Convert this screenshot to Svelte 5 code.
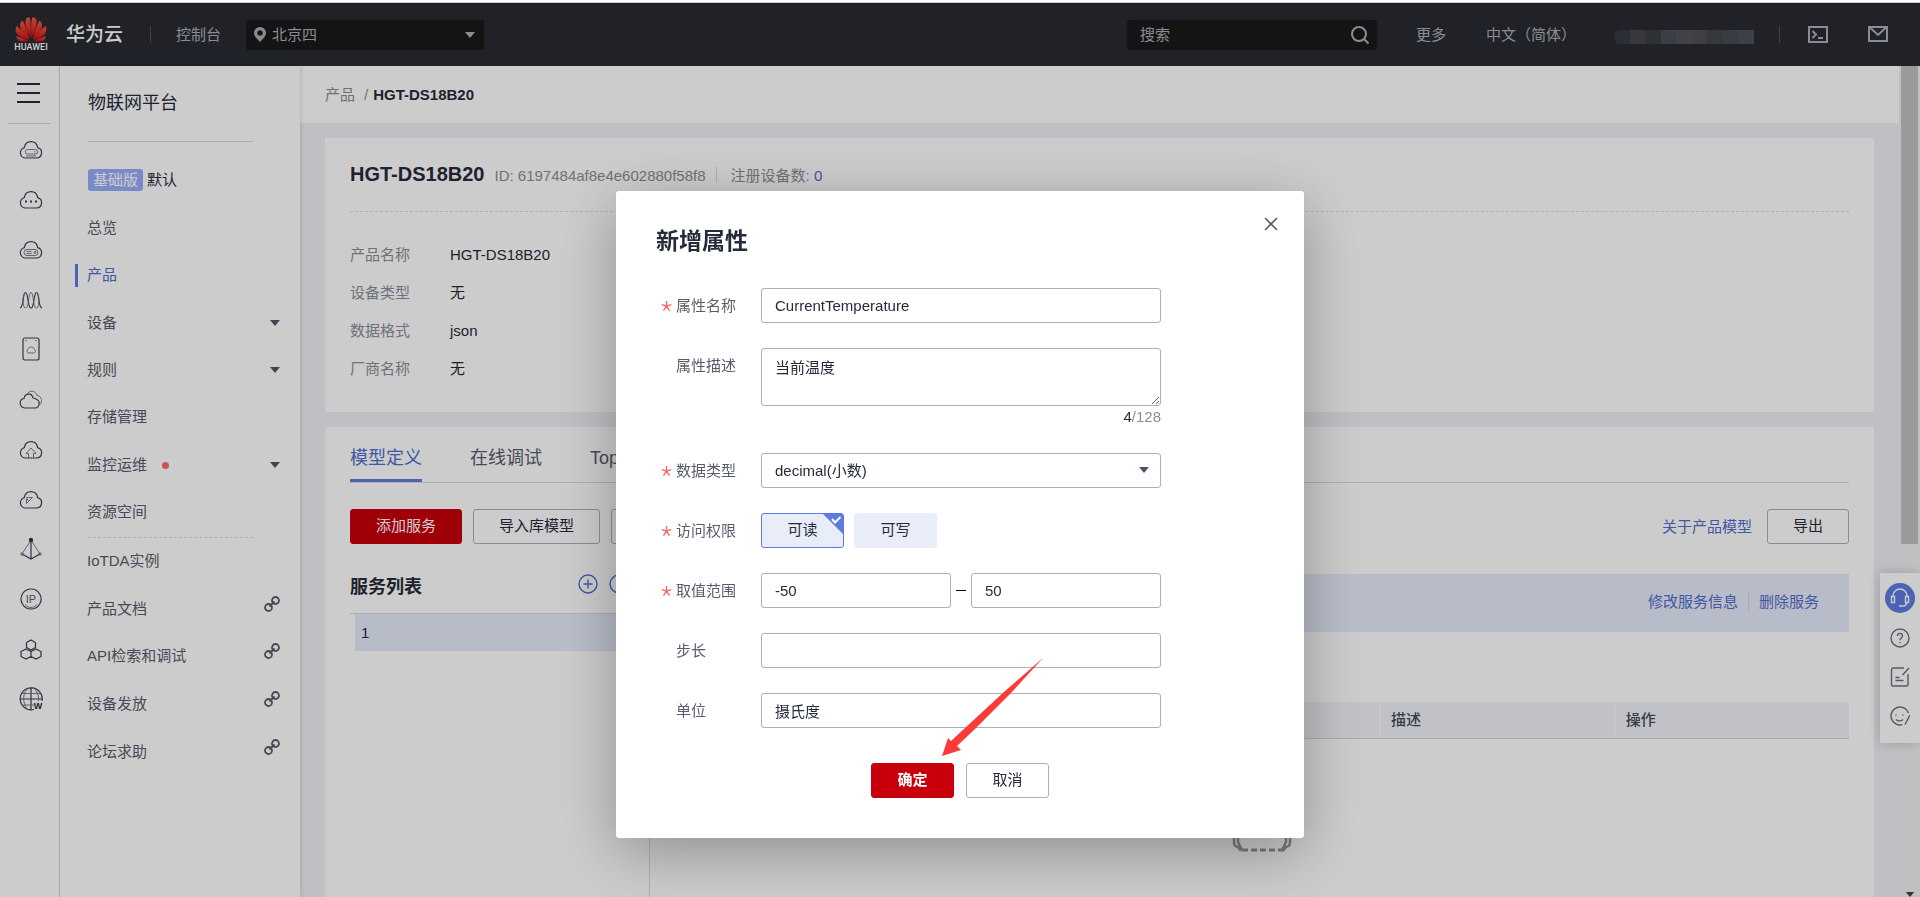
<script>
  // Product detail page of the IoT console with the "add property" dialog open.
  const cloud = 'M8 22h10.500a5.300 5.300 0 0 0 1.200-10.400C19 8 16.500 5.700 13 5.700S7 8 6.300 11.600A5.300 5.300 0 0 0 8 22z';

  const rail = [
    { name: '弹性云服务器', d: cloud, thin: 'M9.500 13.500h8a2 2 0 0 1 0 4.500h-8a2 2 0 0 1 0-4.500zM16 15.800h1.500M8 20h10' },
    { name: '云容器', d: cloud, thin: '', dots: true },
    { name: '裸金属服务器', d: cloud, thin: 'M9 13.500h8a3 3 0 0 1 0 6h-8a3 3 0 0 1 0-6zM8.500 15.500h5M8.500 17.500h5M17 15.500a1 1 0 1 0 .1 0z' },
    { name: '弹性伸缩', d: 'M2 22c4 0 2.500-15.500 5.500-15.500S9.500 22 13 22s2.500-15.500 5.500-15.500S20 22 24 22', thin: 'M7.500 22c-3.500 0-3-15.500 0-15.500M7.500 22c4 0 2.500-15.500 5.500-15.500S14.500 22 18.500 22M18.500 6.500c3 0 3.500 15.500 0 15.500' },
    { name: '云硬盘', d: 'M7 2h12a2 2 0 0 1 2 2v18a2 2 0 0 1-2 2H7a2 2 0 0 1-2-2V4a2 2 0 0 1 2-2zM7.500 4.500h1M17.500 4.500h1', thin: 'M11 17h4.500a2 2 0 0 0 .8-3.800c-.5-3-5.500-3-6.200 0A2 2 0 0 0 11 17z' },
    { name: '云备份', d: 'M7 22h10a4.500 4.500 0 0 0 1-8.800c-1-1-2-1.200-3-1.200-1-5.500-8-5-9 .5C.8 13 .8 21.500 7 22z', thin: 'M9 8c3-4.500 9-3 10 1.500 5 .5 6 6.500 2.500 9.500' },
    { name: '对象存储', d: cloud, thin: 'M10.500 22v-4.500H8l5-5.500 5 5.500h-2.500V22' },
    { name: '云加速', d: cloud, thin: 'M8.500 11.500h6l-6 6v-4.500M8.500 12l2 3' },
    { name: '负载均衡', d: 'M13 3v20M4 18l9 5 9-5', thin: 'M13 4 4 18M13 4l9 14M3 17h2v2H3zM21 17h2v2h-2z', top: true },
    { name: '弹性公网', d: 'M13 3a10 10 0 1 0 .1 0z', thin: 'M7 18.500c3.500 4 8.500 4 12 0', text: 'IP' },
    { name: '区块链', d: 'm13 4 4.500 2.500v5L13 14l-4.500-2.500v-5zM8 13l5 2.500v5L8 23l-5-2.500v-5zM18 13l5 2.500v5L18 23l-5-2.500v-5z', thin: '' },
    { name: '域名', d: 'M16 23.500A11 11 0 1 1 24 15M13 2v22M2.500 13H24', thin: 'M9 23C4.500 16 4.500 9 9 3M17 3c3 4 4 8 3.500 12M4 7.500h18M4 19h12', text: 'w' }
  ];

  const menu = [
    { label: '总览' },
    { label: '产品', active: true },
    { label: '设备', sub: true },
    { label: '规则', sub: true },
    { label: '存储管理' },
    { label: '监控运维', sub: true, dot: true },
    { label: '资源空间' }
  ];
  const links = [
    { label: 'IoTDA实例' },
    { label: '产品文档', ext: true },
    { label: 'API检索和调试', ext: true },
    { label: '设备发放', ext: true },
    { label: '论坛求助', ext: true }
  ];
  const info = [
    ['产品名称', 'HGT-DS18B20'],
    ['设备类型', '无'],
    ['数据格式', 'json'],
    ['厂商名称', '无']
  ];
  const mosaic = ['#363a44', '#45484f', '#3c3e42', '#4a4e58', '#52545b', '#4e5158', '#44464b', '#474b54', '#4d5058'];
  // left half of the flower, mirrored for the right half
  const petals = [
    'M15.400 21C13 15 9.500 9 10.500 3 11 1 13 .3 14.700.3 16 5 16 14 15.400 21z',
    'M14.500 22.500C9 18 4.500 13 5 8c.3-2.500 1.500-3.700 2.800-4.200C10 9 13 15 14.500 22.500z',
    'M13.600 23C8 21.500 1 18.500.6 13c-.1-2 .4-3.200 1-4C5 12.500 11 17 13.600 23z',
    'M13 24c-4 1-9 1-10.500-1.500-.7-1-1.100-2.300-1.100-3.500C5 20.500 10 22 13 24z'
  ];

  let name = $state('CurrentTemperature');
  let desc = $state('当前温度');
  let type = $state('decimal');
  let readable = $state(true);
  let writable = $state(false);
  let min = $state('-50');
  let max = $state('50');
  let step = $state('');
  let unit = $state('摄氏度');
</script>

{#snippet caret()}
  <svg class="caret" viewBox="0 0 10 6" aria-hidden="true"><path d="M0 0h10L5 6z" /></svg>
{/snippet}

{#snippet star()}
  <svg class="star" viewBox="0 0 12 12" aria-hidden="true"><path d="M6 6V.5M6 6 .8 4.500M6 6l5.200-1.500M6 6l-3.300 5M6 6l3.300 5" /></svg>
{/snippet}

<div class="app">
  <header>
    <div class="logo">
      <svg viewBox="0 0 32 25" aria-hidden="true">
        <defs>
          <linearGradient id="petal" x1="0" y1="0" x2="0" y2="1">
            <stop offset="0" stop-color="#f25a45" />
            <stop offset="1" stop-color="#cf0a0e" />
          </linearGradient>
        </defs>
        {#each petals as d}
          <path {d} fill="url(#petal)" />
          <path {d} fill="url(#petal)" transform="matrix(-1 0 0 1 32 0)" />
        {/each}
      </svg>
      <span>HUAWEI</span>
    </div>
    <strong class="brand">华为云</strong>
    <i class="bar"></i>
    <a class="console" href="#console">控制台</a>
    <button class="region">
      <svg viewBox="0 0 12 15" aria-hidden="true"><path fill-rule="evenodd" d="M6 0a6 6 0 0 0-6 6c0 3.500 3.500 6 6 9 2.500-3 6-5.500 6-9a6 6 0 0 0-6-6zm0 3.200a2.700 2.700 0 1 1 0 5.400 2.700 2.700 0 0 1 0-5.400z" /></svg>
      <span>北京四</span>
      {@render caret()}
    </button>
    <div class="search">
      <input aria-label="搜索" placeholder="搜索" />
      <svg viewBox="0 0 18 18" aria-hidden="true"><circle cx="8" cy="8" r="7" /><path d="m13 13 4.500 4.500" /></svg>
    </div>
    <a href="#more" class="more">更多</a>
    <a href="#lang" class="lang">中文（简体）</a>
    <div class="user">{#each mosaic as c}<i style="background:{c}"></i>{/each}</div>
    <i class="bar"></i>
    <button class="tool" aria-label="终端"><svg viewBox="0 0 20 17"><path d="M1 1h18v15H1zM4.500 5l3.500 3.500L4.500 12M10 12h5" /></svg></button>
    <button class="tool" aria-label="消息"><svg viewBox="0 0 20 17"><path d="M1 1h18v14H1zM2 1.500l8 7.500 8-7.500" /></svg></button>
  </header>

  <div class="body">
    <nav class="rail">
      <button class="burger" aria-label="菜单"><i></i><i></i><i></i></button>
      <div class="railicons">
        {#each rail as r}
          <a href="#service" aria-label={r.name}>
            <svg viewBox="0 0 26 26">
              <path d={r.d} />
              {#if r.thin}<path class="thin" d={r.thin} />{/if}
              {#if r.dots}<path class="dots" d="M7 15.500h2M12 15.500h2M17 15.500h2" />{/if}
              {#if r.top}<circle class="fill" cx="13" cy="4" r="1.600" />{/if}
              {#if r.text === 'IP'}<text x="13" y="17" font-size="11">IP</text>{/if}
              {#if r.text === 'w'}<text class="w" x="20" y="23" font-size="9">W</text>{/if}
            </svg>
          </a>
        {/each}
      </div>
    </nav>

    <aside>
      <h2>物联网平台</h2>
      <div class="edition"><span>基础版</span>默认</div>
      <ul class="menu">
        {#each menu as m}
          <li class:active={m.active}>
            <a href="#menu">{m.label}</a>
            {#if m.dot}<i class="dot"></i>{/if}
            {#if m.sub}{@render caret()}{/if}
          </li>
        {/each}
      </ul>
      <ul class="links">
        {#each links as l}
          <li>
            <a href="#link">{l.label}</a>
            {#if l.ext}
              <svg class="chain" viewBox="0 0 16 16" aria-hidden="true"><circle cx="11.500" cy="4.500" r="3.500" /><circle cx="4.500" cy="11.500" r="3.500" /><path d="m5.500 10.500 5-5" /></svg>
            {/if}
          </li>
        {/each}
      </ul>
    </aside>

    <main>
      <div class="crumbs"><a href="#products">产品</a><span>/</span><b>HGT-DS18B20</b></div>

      <section class="card product">
        <div class="head">
          <h1>HGT-DS18B20</h1>
          <span class="pid">ID: 6197484af8e4e602880f58f8</span>
          <i></i>
          <span>注册设备数: <a href="#devices">0</a></span>
        </div>
        <dl>
          {#each info as [k, v]}
            <dt>{k}</dt>
            <dd>{v}</dd>
          {/each}
        </dl>
      </section>

      <section class="card model">
        <div class="tabs">
          <button class="on">模型定义</button>
          <button>在线调试</button>
          <button>Topic</button>
        </div>
        <div class="actions">
          <button class="btn primary">添加服务</button>
          <button class="btn">导入库模型</button>
          <button class="btn" aria-label="导入"></button>
          <a href="#about">关于产品模型</a>
          <button class="btn">导出</button>
        </div>
        <div class="split">
          <div class="services">
            <div class="shead">
              <h3>服务列表</h3>
              <button aria-label="添加"><svg viewBox="0 0 20 20"><circle cx="10" cy="10" r="9" /><path d="M10 5.500v9M5.500 10h9" /></svg></button>
              <button aria-label="搜索"><svg viewBox="0 0 20 20"><circle cx="10" cy="10" r="9" /></svg></button>
            </div>
            <div class="sitem">1</div>
          </div>
          <div class="detail">
            <div class="band"><a href="#edit">修改服务信息</a><i></i><a href="#delete">删除服务</a></div>
            <table>
              <thead><tr><th></th><th></th><th></th><th>描述</th><th>操作</th></tr></thead>
            </table>
            <svg class="empty" viewBox="0 0 60 60" aria-hidden="true"><path d="M2 30v20a5 5 0 0 0 4 5l3 4M58 30v20a5 5 0 0 1-4 5l-3 4M6 30v20l4 8M54 30v20l-4 8" /><path class="dash" d="M10 58h41" /></svg>
          </div>
        </div>
      </section>
    </main>

    <div class="scroll"><div class="thumb"></div>{@render caret()}</div>
  </div>

  <div class="float">
    <button class="help" aria-label="在线客服"><svg viewBox="0 0 20 20"><path d="M3 9V8a7 7 0 0 1 14 0v1M1.500 8.500h3v6h-3zM15.500 8.500h3v6h-3zM16.500 15c0 2-2 3-4 3M9 18h3.500" /></svg></button>
    <button aria-label="帮助"><svg viewBox="0 0 20 20"><circle cx="10" cy="10" r="9" /><path d="M7.500 8c0-3.500 5-3.500 5 0 0 2-2.500 2-2.500 4.200M10 14v1.300" /></svg></button>
    <button aria-label="反馈"><svg viewBox="0 0 20 20"><path d="M14 1H3a1.500 1.500 0 0 0-1.500 1.500v15A1.500 1.500 0 0 0 3 19h13.500a1.500 1.500 0 0 0 1.500-1.500V7M19 1l-6.500 7M5.500 10.500h4M5.500 13.500h8" /></svg></button>
    <button aria-label="评价"><svg viewBox="0 0 20 20"><path d="M12.500 18.700A9 9 0 1 1 18.500 7M20 9l-5 9.500M6 8.500v1.300M13 8.500v1.300M6 13.500c2 1.800 5 1.800 7 0" /></svg></button>
  </div>

  <div class="mask">
    <form class="dialog" onsubmit={(e) => e.preventDefault()}>
      <button type="button" class="close" aria-label="关闭"><svg viewBox="0 0 14 14"><path d="m1 1 12 12M13 1 1 13" /></svg></button>
      <h2>新增属性</h2>

      <div class="row">
        <label for="name">{@render star()}属性名称</label>
        <input id="name" bind:value={name} />
      </div>
      <div class="row">
        <label for="desc">属性描述</label>
        <div class="area">
          <textarea id="desc" bind:value={desc}></textarea>
          <div class="count"><b>{desc.length}</b>/128</div>
        </div>
      </div>
      <div class="row">
        <label for="type">{@render star()}数据类型</label>
        <div class="select">
          <select id="type" bind:value={type}><option value="decimal">decimal(小数)</option></select>
          {@render caret()}
        </div>
      </div>
      <div class="row">
        <span class="label">{@render star()}访问权限</span>
        <div class="perms">
          <label class:checked={readable}>
            <input type="checkbox" bind:checked={readable} />可读
            {#if readable}<svg viewBox="0 0 20 20" aria-hidden="true"><path class="corner" d="M0 0h20v20z" /><path class="tick" d="m9 5 3 3.500L17.500 3" /></svg>{/if}
          </label>
          <label class:checked={writable}><input type="checkbox" bind:checked={writable} />可写</label>
        </div>
      </div>
      <div class="row">
        <label for="min">{@render star()}取值范围</label>
        <div class="range">
          <input id="min" bind:value={min} />
          <i></i>
          <input aria-label="最大值" bind:value={max} />
        </div>
      </div>
      <div class="row">
        <label for="step">步长</label>
        <input id="step" bind:value={step} />
      </div>
      <div class="row">
        <label for="unit">单位</label>
        <input id="unit" bind:value={unit} />
      </div>

      <div class="foot">
        <button class="btn primary"><b>确定</b></button>
        <button type="button" class="btn">取消</button>
      </div>

      <svg class="arrow" viewBox="0 0 101 99" aria-hidden="true"><path d="M0 98 6 80l3 3L63 33 101 0 69 35 33 71 15 88l4 4z" /></svg>
    </form>
  </div>
</div>

<style>
  :global(body) { margin: 0; overflow: hidden; }
  .app {
    display: flex;
    flex-direction: column;
    height: 100vh;
    box-sizing: border-box;
    border-top: 3px solid #fff;
    font: 15px/22px "Liberation Sans", "Noto Sans CJK SC", sans-serif;
    color: #252b3a;
    background: #eef0f5;
  }
  .app *, .app *::before { box-sizing: border-box; }
  a { color: inherit; text-decoration: none; }
  button, input, select, textarea { font: inherit; color: inherit; margin: 0; }
  button { padding: 0; border: 0; background: none; cursor: pointer; }
  ul, dl, dd, h1, h2, h3 { margin: 0; padding: 0; }
  ul { list-style: none; }
  svg { display: block; fill: none; flex: none; }
  .caret { width: 10px; height: 6px; fill: #4f566a; }

  header {
    display: flex;
    align-items: center;
    flex: none;
    height: 63px;
    padding: 0 32px 0 15px;
    background: #282b33;
    color: #adb0b8;
    box-shadow: 0 -1px 0 #ccc;
  }
  .logo { width: 32px; color: #fff; }
  .logo svg { width: 32px; height: 25px; }
  .logo span { display: flex; justify-content: center; font: 500 9px/11px Roboto, sans-serif; }
  .brand { margin-left: 19px; font-size: 19px; font-weight: 500; color: #fff; }
  .bar { width: 1px; height: 17px; background: #50535c; }
  .brand + .bar { margin: 0 25px 0 27px; }
  .region {
    display: flex;
    align-items: center;
    width: 238px;
    height: 30px;
    margin-left: 25px;
    padding: 0 9px 0 8px;
    border-radius: 3px;
    background: #191919;
  }
  .region svg:first-child { width: 12px; height: 15px; fill: #adb0b8; }
  .region span { margin: 0 auto 0 6px; }
  .region .caret { fill: #adb0b8; height: 8px; }
  .search {
    display: flex;
    align-items: center;
    width: 250px;
    height: 30px;
    margin-left: auto;
    padding: 0 8px 0 13px;
    border-radius: 3px;
    background: #191919;
  }
  .search input { flex: 1; min-width: 0; padding: 0; border: 0; background: none; outline: 0; }
  .search input::placeholder { color: #adb0b8; opacity: 1; }
  .search svg { width: 18px; height: 18px; stroke: #adb0b8; stroke-width: 2; }
  .more { margin-left: 39px; }
  .lang { margin-left: 40px; }
  .user { display: flex; width: 140px; margin: 4px 25px 0 38px; }
  .user i { flex: 1; height: 14px; }
  .user i:first-child { border-radius: 6px 0 0 6px; }
  .tool { margin-left: 28px; }
  .tool + .tool { margin-left: 40px; }
  .tool svg { width: 20px; height: 17px; stroke: #adb0b8; stroke-width: 2; }

  .body { display: flex; flex: 1; min-height: 0; }
  .rail { flex: none; width: 60px; border-right: 1px solid #dcdcde; background: #fff; }
  .burger {
    display: flex;
    flex-direction: column;
    justify-content: center;
    gap: 7px;
    width: 43px;
    height: 58px;
    margin-left: 8px;
    padding: 0 11px 4px 9px;
    border-bottom: 1px solid #dcdcde;
  }
  .burger i { height: 2px; background: #252b3a; }
  .railicons a { display: flex; align-items: center; height: 50px; padding-left: 18px; }
  .railicons svg { width: 26px; height: 26px; stroke: #3c4252; stroke-width: 1.2; }
  .railicons .thin { stroke: #6c7180; stroke-width: 0.9; }
  .railicons .dots { stroke-width: 2; }
  .railicons .fill { fill: #252b3a; }
  .railicons text { fill: #5c6170; stroke: none; text-anchor: middle; }
  .railicons .w { fill: #252b3a; font-weight: 700; }

  aside { position: relative; flex: none; width: 240px; padding-right: 20px; background: #fff; box-shadow: 1px 0 4px rgba(0, 0, 0, .12); }
  aside h2 { width: 165px; height: 76px; margin-left: 28px; border-bottom: 1px solid #dcdcde; font-size: 18px; line-height: 74px; font-weight: 400; }
  .edition { display: flex; align-items: center; gap: 4px; height: 23px; margin: 26px 0 13px 28px; }
  .edition span { padding: 0 5px; border-radius: 3px; background: #96adfa; color: #fff; line-height: 22px; }
  .menu, .links { display: grid; grid-auto-rows: 1fr; color: #575d6c; }
  .menu { height: 332px; }
  .links { position: relative; height: 240px; padding-top: 1px; }
  .links::before { content: ''; position: absolute; left: 28px; top: 1px; width: 165px; border-top: 1px dashed #dcdcde; }
  .menu li, .links li { position: relative; display: flex; align-items: center; padding-left: 27px; }
  .menu .caret, .chain { margin-left: auto; }
  .active { color: #526ecc; }
  .active::before { content: ''; position: absolute; left: 15px; width: 3px; height: 23px; background: #5e7ce0; }
  .dot { width: 7px; height: 7px; margin: 2px 0 0 15px; border-radius: 50%; background: #fa6b66; }
  .chain { width: 16px; height: 16px; margin-bottom: 10px; stroke: #575d6c; stroke-width: 1.8; }

  main { display: flex; flex-direction: column; flex: 1; min-width: 0; }
  .crumbs { flex: none; height: 57px; padding-left: 25px; background: #fff; line-height: 57px; }
  .crumbs a, .crumbs span { color: #8a8e99; }
  .crumbs span { margin: 0 5px 0 9px; }
  .card { flex: none; margin: 15px 25px 0; padding: 0 25px; background: #fff; }
  .product { height: 274px; }
  .head { display: flex; align-items: baseline; height: 74px; padding-top: 24px; border-bottom: 1px dashed #dcdcde; color: #8a8e99; }
  .head h1 { color: #252b3a; font-size: 20px; line-height: 24px; }
  .head .pid { margin-left: 10px; }
  .head i { align-self: flex-start; width: 1px; height: 15px; margin: 5px 14px 0 10px; background: #dcdcde; }
  .head a { color: #526ecc; }
  dl { display: grid; grid-template-columns: 100px 1fr; row-gap: 16px; padding-top: 32px; }
  dt { color: #8a8e99; }

  .model { flex: 1 0 0; min-height: 0; display: flex; flex-direction: column; }
  .tabs { display: flex; flex: none; gap: 48px; height: 56px; border-bottom: 1px solid #dcdcde; font-size: 18px; color: #575d6c; }
  .tabs button { padding-top: 9px; border-bottom: 3px solid transparent; }
  .tabs .on { border-color: #5e7ce0; color: #526ecc; }
  .btn { height: 35px; padding: 0 25px 2px; border: 1px solid #adb0b8; border-radius: 3px; }
  .primary { border-color: #c7000b; background: #c7000b; color: #fff; }
  .actions { display: flex; align-items: center; flex: none; gap: 11px; margin-top: 26px; }
  .actions a { margin: 0 4px 0 auto; color: #526ecc; }
  .split { display: flex; flex: 1; }
  .services { flex: none; width: 300px; border-right: 1px solid #dcdcde; }
  .shead { display: flex; align-items: center; gap: 11px; height: 70px; padding: 11px 20px 0 0; border-bottom: 1px solid #dcdcde; }
  .shead h3 { margin-right: auto; padding-top: 6px; font-size: 18px; }
  .shead svg { width: 20px; height: 20px; stroke: #526ecc; stroke-width: 1.4; }
  .sitem { height: 37px; margin-left: 5px; padding-left: 6px; background: #e6ecfb; line-height: 38px; }
  .detail { flex: 1; padding: 30px 0 0 25px; }
  .band { display: flex; align-items: center; justify-content: flex-end; height: 58px; padding: 0 30px 2px 0; background: #e6ecfb; color: #526ecc; }
  .band i { width: 1px; height: 20px; margin: 0 10px; background: #d3d7e2; }
  table { width: 100%; margin-top: 70px; border-collapse: collapse; table-layout: fixed; }
  th { height: 36px; padding: 0 11px; border-left: 1px solid #fff; border-bottom: 1px solid #d5d8df; background: #f2f3f9; font-weight: 500; text-align: left; color: #464c59; }
  .empty { width: 60px; height: 60px; margin: 53px auto 0; stroke: #999; stroke-width: 2.5; }
  .empty .dash { stroke-width: 3; stroke-dasharray: 6 3; }

  .scroll { display: flex; flex-direction: column; flex: none; justify-content: space-between; align-items: center; width: 21px; background: #f1f1f1; }
  .thumb { width: 17px; height: 478px; background: #c1c1c1; }
  .scroll .caret { height: 5px; fill: #404040; }

  .float {
    position: fixed;
    right: 0;
    top: 573px;
    display: flex;
    flex-direction: column;
    align-items: center;
    gap: 19px;
    width: 40px;
    height: 170px;
    padding-top: 10px;
    background: #fff;
    box-shadow: 0 0 12px rgba(0, 0, 0, .2);
  }
  .float svg { width: 20px; height: 20px; stroke: #6c7180; stroke-width: 1.4; }
  .float .help { display: flex; align-items: center; justify-content: center; width: 30px; height: 30px; margin-bottom: -4px; border-radius: 50%; background: #5e7ce0; }
  .help svg { stroke: #fff; }

  .mask { position: fixed; z-index: 10; inset: 3px 0 0; display: flex; align-items: flex-start; justify-content: center; padding-top: 188px; background: rgba(0, 0, 0, .2); }
  .dialog { position: relative; width: 688px; padding: 35px 40px 40px; border-radius: 3px; background: #fff; box-shadow: 0 15px 60px rgba(0, 0, 0, .3); }
  .dialog h2 { margin-bottom: 32px; font-size: 23px; line-height: 30px; }
  .close { position: absolute; right: 26px; top: 26px; }
  .close svg { width: 14px; height: 14px; stroke: #575d6c; stroke-width: 1.6; }
  .row { display: flex; align-items: flex-start; margin-bottom: 25px; }
  .row > label, .label { position: relative; flex: none; width: 105px; padding-left: 20px; line-height: 35px; color: #575d6c; }
  .star { position: absolute; left: 5px; top: 12px; width: 11px; height: 12px; stroke: #fa6b66; stroke-width: 1.5; }
  .row > input, .area, .select, .range { width: 400px; }
  .row input:not([type]), textarea, select { height: 35px; padding: 0 13px; border: 1px solid #adb0b8; border-radius: 3px; background: #fff; outline: 0; }
  .row input[type='checkbox'] { position: absolute; inset: 0; margin: 0; opacity: 0; }
  textarea { display: block; width: 100%; height: 58px; padding: 8px 13px; }
  .count { line-height: 22px; text-align: right; color: #8a8e99; }
  .count b { font-weight: 400; color: #252b3a; }
  .select { position: relative; }
  select { width: 100%; appearance: none; }
  .select .caret { position: absolute; right: 12px; top: 14px; }
  .perms { display: flex; gap: 10px; }
  .perms label { position: relative; width: 83px; height: 35px; border: 1px solid #e9edfa; border-radius: 3px; background: #e9edfa; line-height: 32px; text-align: center; }
  .perms .checked { border-color: #5e7ce0; }
  .perms svg { position: absolute; right: 0; top: 0; width: 20px; height: 20px; }
  .corner { fill: #5e7ce0; }
  .tick { stroke: #fff; stroke-width: 2; }
  .range { display: flex; align-items: center; gap: 5px; }
  .range input { flex: 1; min-width: 0; }
  .range i { width: 10px; height: 1px; background: #000; }
  .foot { display: flex; justify-content: center; gap: 12px; margin-top: 35px; }
  .foot .btn { width: 83px; }
  .arrow { position: absolute; left: 326px; top: 467px; width: 101px; height: 99px; fill: #fd3a3a; }
</style>
